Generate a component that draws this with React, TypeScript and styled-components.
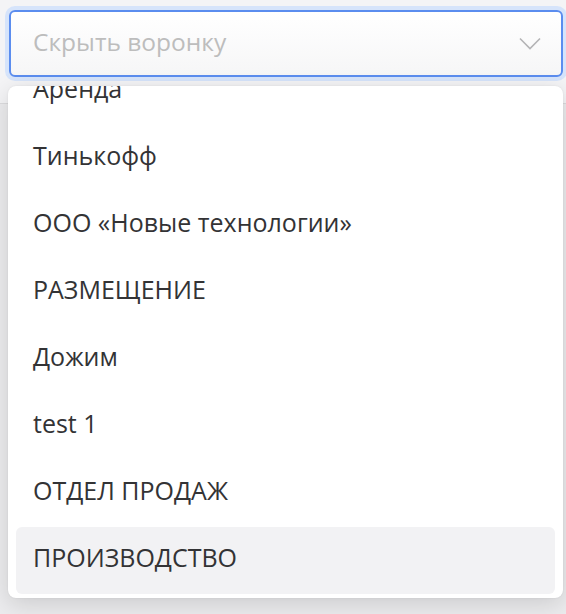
import React from "react";
import styled, { createGlobalStyle } from "styled-components";

const Global = createGlobalStyle`
  html, body { margin: 0; padding: 0; }
  body {
    background: linear-gradient(#f4f4f6 0 103px, #dcdcde 103px 104px, #ececee 104px);
    font-family: "Open Sans", "Noto Sans", sans-serif;
  }
`;

const Page = styled.div`
  position: relative;
  height: 614px;
  overflow: hidden;
  box-sizing: border-box;
  padding: 10px 3px 0 9px;
`;

const SelectWrap = styled.div`
  position: relative;
`;

const Control = styled.div`
  height: 67px;
  box-sizing: border-box;
  border: 2px solid #5b8def;
  border-radius: 6px;
  box-shadow: 0 0 0 4px #d6e4fb;
  background: linear-gradient(#ffffff, #f6f6f7);
  display: flex;
  align-items: center;
  justify-content: space-between;
  padding: 0 20px 0 22px;
`;

const Placeholder = styled.span`
  font-size: 24.5px;
  line-height: 1;
  color: #bdbdbd;
  margin-top: -2px;
`;

const Menu = styled.div`
  position: absolute;
  top: 76px;
  left: -1px;
  right: 0;
  height: 512px;
  box-sizing: border-box;
  background: #fff;
  border-radius: 8px;
  box-shadow: 0 6px 24px rgba(0, 0, 0, 0.14), 0 0 2px rgba(0, 0, 0, 0.08);
  padding: 0 8px 4px;
  display: flex;
  flex-direction: column;
  justify-content: flex-end;
  overflow: hidden;
`;

const Option = styled.div<{ $active?: boolean }>`
  flex-shrink: 0;
  height: 67px;
  box-sizing: border-box;
  display: flex;
  align-items: center;
  padding: 0 0 6px 17px;
  border-radius: 6px;
  font-size: 25px;
  line-height: 1;
  color: #333335;
  background: ${(p) => (p.$active ? "#f2f2f4" : "transparent")};
`;

const options = [
  "Аренда",
  "Тинькофф",
  "ООО «Новые технологии»",
  "РАЗМЕЩЕНИЕ",
  "Дожим",
  "test 1",
  "ОТДЕЛ ПРОДАЖ",
  "ПРОИЗВОДСТВО",
];

const Chevron = () => (
  <svg width="22" height="13" viewBox="0 0 22 13" fill="none">
    <path d="M1 1.5 L11 11.5 L21 1.5" stroke="#b4b4b6" strokeWidth="1.6" />
  </svg>
);

export default function App() {
  return (
    <>
      <Global />
      <Page>
        <SelectWrap>
          <Control>
            <Placeholder>Скрыть воронку</Placeholder>
            <Chevron />
          </Control>
          <Menu>
            {options.map((o, i) => (
              <Option key={o} $active={i === options.length - 1}>
                {o}
              </Option>
            ))}
          </Menu>
        </SelectWrap>
      </Page>
    </>
  );
}
